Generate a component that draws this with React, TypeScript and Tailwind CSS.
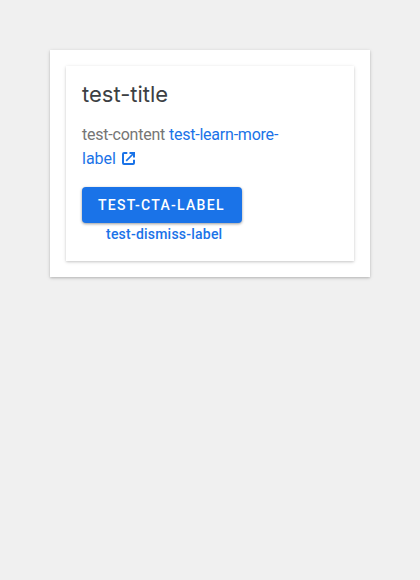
import React from "react";

export default function App() {
  return (
    <div className="min-h-screen bg-[#f0f0f0] p-[50px] font-['Roboto',sans-serif]">
      <div className="w-[320px] bg-white p-4 shadow-[0_1px_4px_rgba(0,0,0,0.14),0_1px_2px_rgba(0,0,0,0.14)]">
        <div className="h-[195px] bg-white px-4 pt-[15px] shadow-[0_1px_4px_rgba(0,0,0,0.12),0_1px_2px_rgba(0,0,0,0.12)]">
          <h3 className="font-['Inter',sans-serif] text-[22px] leading-[26px] text-[#3c4043]">test-title</h3>
          <p className="mt-4 text-base leading-6 tracking-[-0.22px] text-[#757575]">
            test-content{" "}
            <a className="text-[#1a73e8]">
              test-learn-more-
              <br />
              <span className="tracking-normal">label</span>
              <svg viewBox="0 0 13 13" fill="none" stroke="currentColor" strokeWidth="2" className="ml-[6px] inline-block size-[13px] align-[-1px]">
                <path d="M5.3 1H2Q1 1 1 2V11Q1 12 2 12H11Q12 12 12 11V7.7M7.5 1H12V5.5" />
                <path d="M12 1L4.2 8.8" strokeWidth="1.7" />
              </svg>
            </a>
          </p>
          <button className="mt-4 block h-9 w-40 rounded bg-[#1a73e8] pl-4 text-left text-sm font-medium tracking-[1.29px] text-white shadow-[0_1px_3px_rgba(0,0,0,0.4)]">
            TEST-CTA-LABEL
          </button>
          <a className="ml-6 block text-sm font-medium leading-[23px] tracking-[0.22px] text-[#1a73e8]">test-dismiss-label</a>
        </div>
      </div>
    </div>
  );
}
